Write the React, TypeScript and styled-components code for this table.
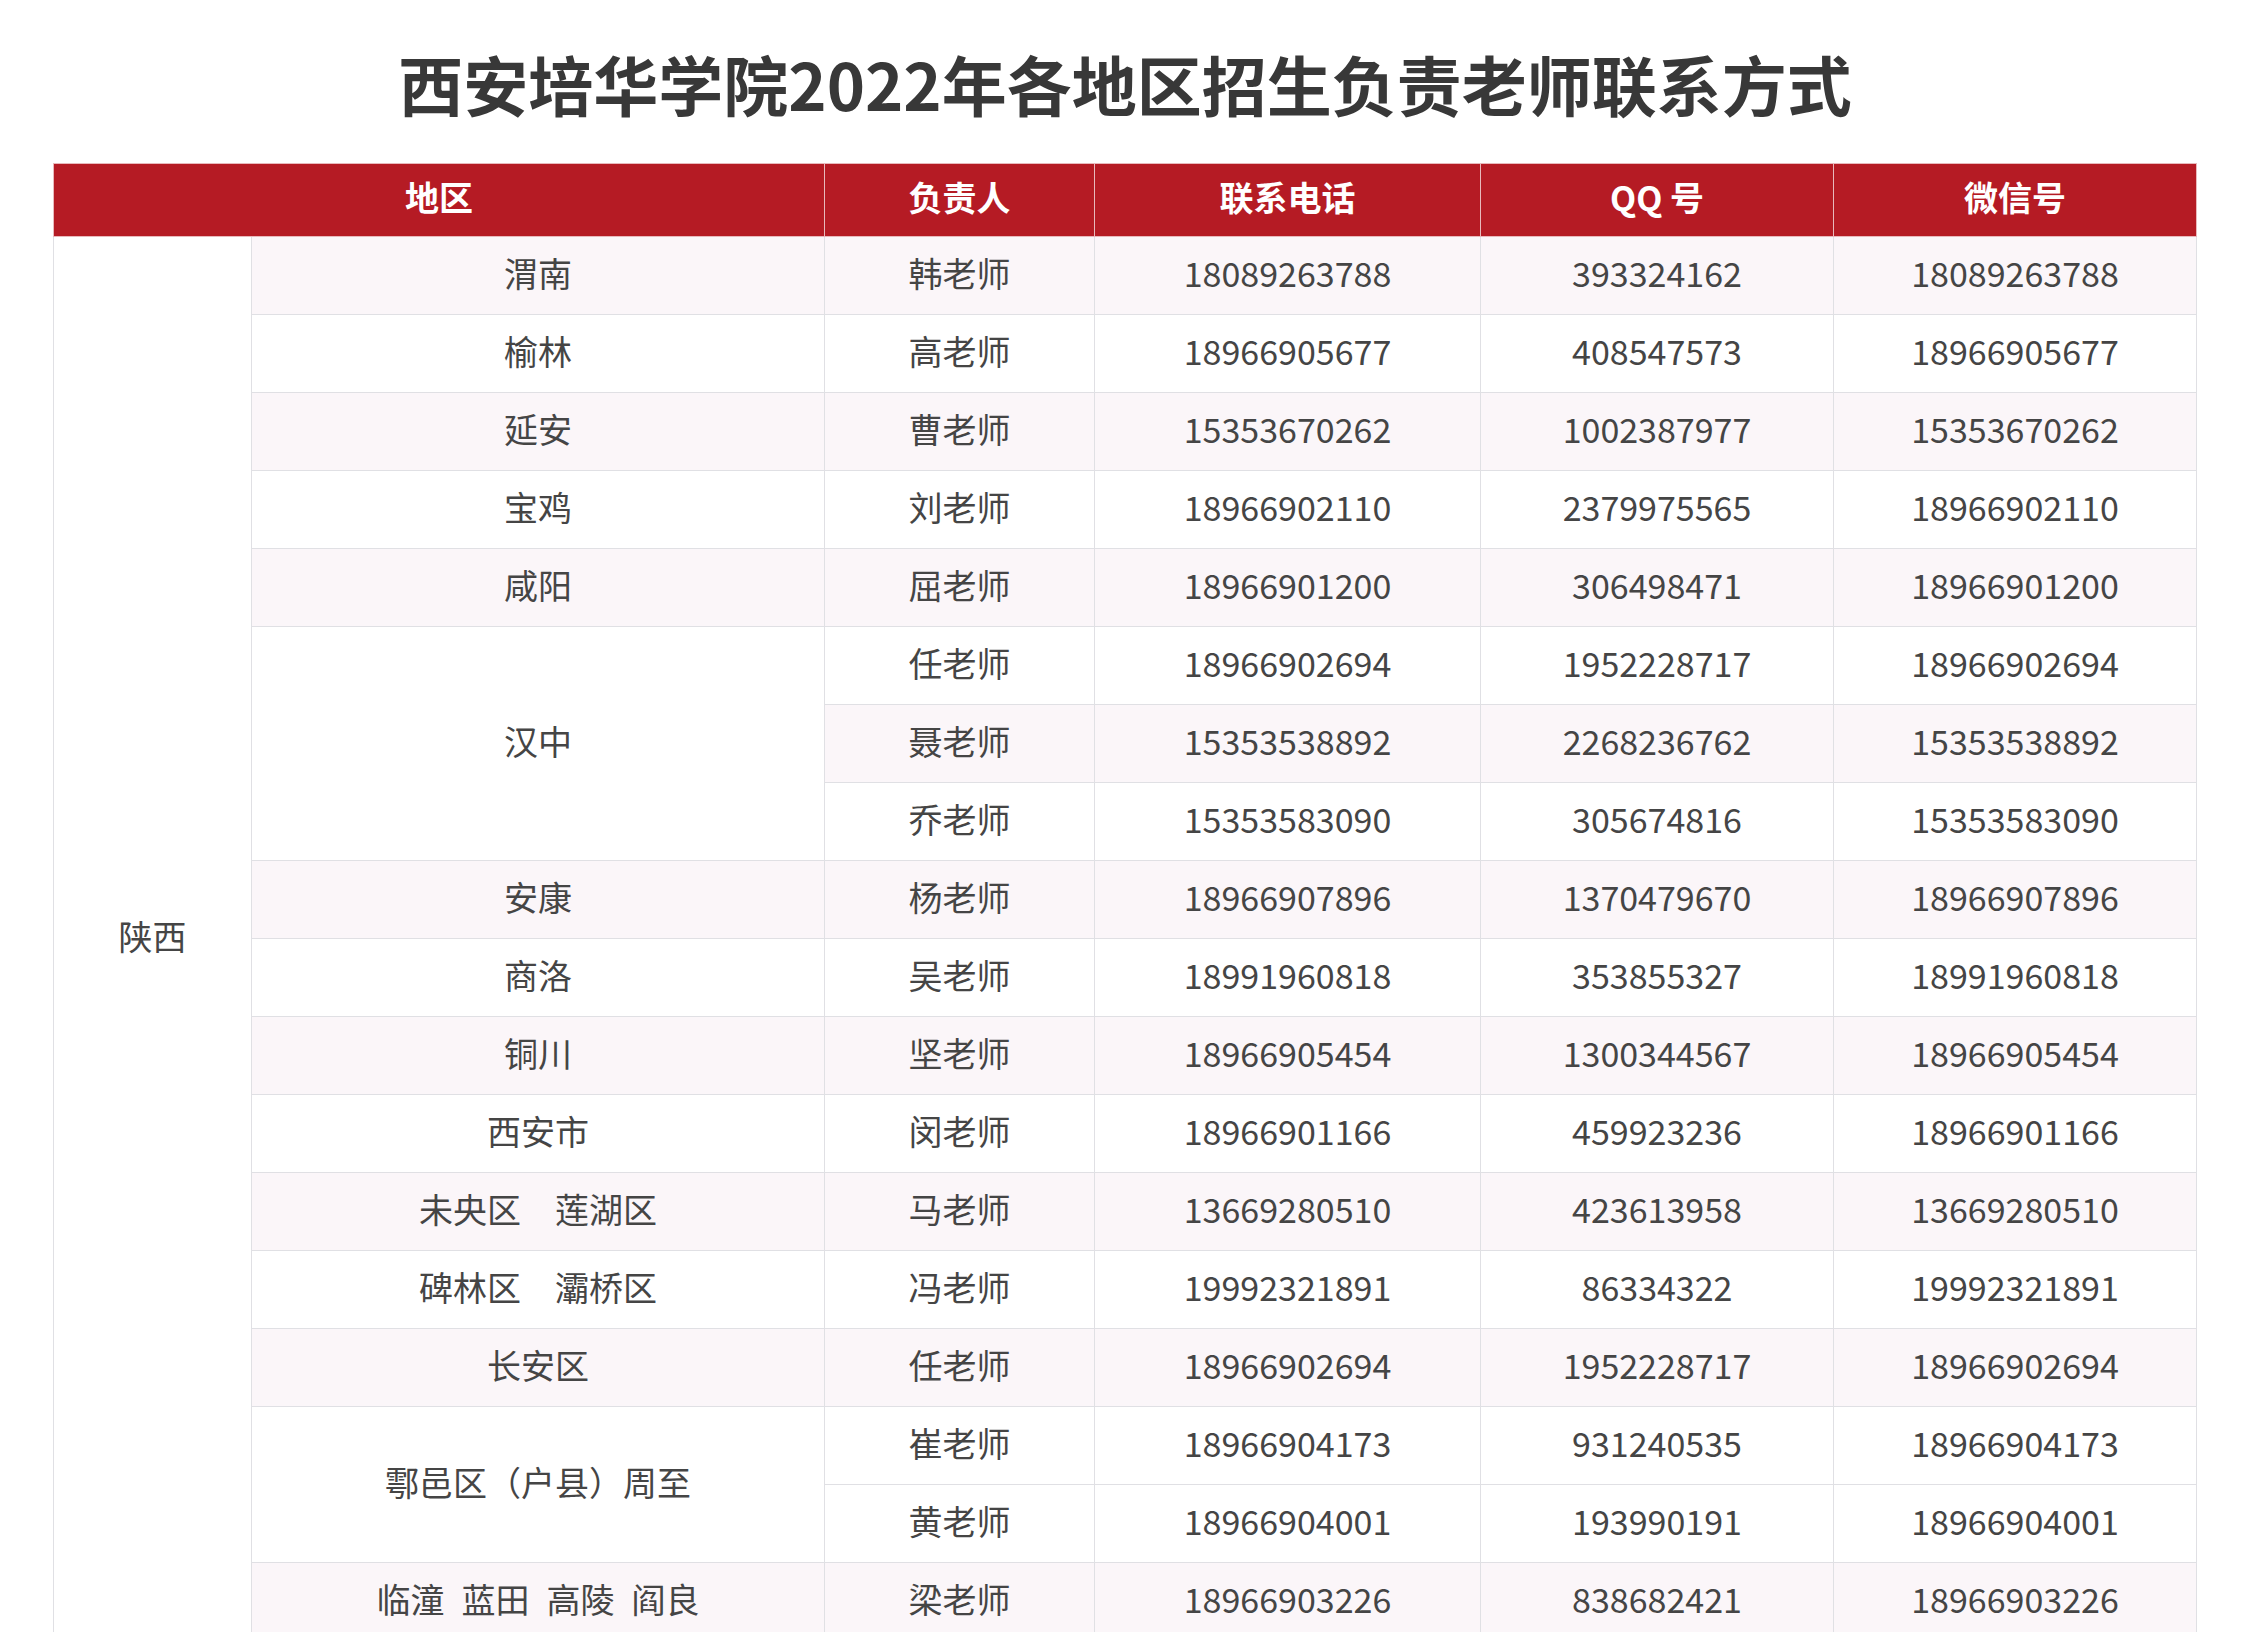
import React from 'react';
import styled, { createGlobalStyle } from 'styled-components';

const GlobalStyle = createGlobalStyle`
  html, body {
    margin: 0;
    padding: 0;
    background: #ffffff;
  }
  body {
    font-family: 'Noto Sans CJK SC', 'Noto Sans', sans-serif;
    color: #454545;
  }
`;

const Page = styled.div`
  width: 2250px;
  padding-top: 36px;
`;

const Title = styled.h1`
  margin: 0 0 32px;
  text-align: center;
  font-size: 65px;
  line-height: 95px;
  font-weight: 700;
  color: #383838;
`;

const Table = styled.table`
  margin: 0 auto;
  width: 2143px;
  border-collapse: collapse;
  table-layout: fixed;
`;

const HeadCell = styled.th`
  height: 65px;
  padding: 0 0 7px;
  background: #b51b24;
  color: #ffffff;
  font-size: 34px;
  font-weight: 700;
  text-align: center;
  border: 1px solid #e8b9bc;
`;

const Cell = styled.td<{ $shade?: boolean }>`
  height: 70px;
  padding: 0 0 7px;
  font-size: 34px;
  text-align: center;
  vertical-align: middle;
  color: #454545;
  background: ${(p) => (p.$shade ? '#fbf6f9' : '#ffffff')};
  border: 1px solid #e0e0e4;
  white-space: pre;
`;

type Row = {
  area?: string;
  span?: number;
  name: string;
  phone: string;
  qq: string;
  shade: boolean;
};

const rows: Row[] = [
  { area: '渭南', name: '韩老师', phone: '18089263788', qq: '393324162', shade: true },
  { area: '榆林', name: '高老师', phone: '18966905677', qq: '408547573', shade: false },
  { area: '延安', name: '曹老师', phone: '15353670262', qq: '1002387977', shade: true },
  { area: '宝鸡', name: '刘老师', phone: '18966902110', qq: '2379975565', shade: false },
  { area: '咸阳', name: '屈老师', phone: '18966901200', qq: '306498471', shade: true },
  { area: '汉中', span: 3, name: '任老师', phone: '18966902694', qq: '1952228717', shade: false },
  { name: '聂老师', phone: '15353538892', qq: '2268236762', shade: true },
  { name: '乔老师', phone: '15353583090', qq: '305674816', shade: false },
  { area: '安康', name: '杨老师', phone: '18966907896', qq: '1370479670', shade: true },
  { area: '商洛', name: '吴老师', phone: '18991960818', qq: '353855327', shade: false },
  { area: '铜川', name: '坚老师', phone: '18966905454', qq: '1300344567', shade: true },
  { area: '西安市', name: '闵老师', phone: '18966901166', qq: '459923236', shade: false },
  { area: '未央区　莲湖区', name: '马老师', phone: '13669280510', qq: '423613958', shade: true },
  { area: '碑林区　灞桥区', name: '冯老师', phone: '19992321891', qq: '86334322', shade: false },
  { area: '长安区', name: '任老师', phone: '18966902694', qq: '1952228717', shade: true },
  { area: '鄠邑区（户县）周至', span: 2, name: '崔老师', phone: '18966904173', qq: '931240535', shade: false },
  { name: '黄老师', phone: '18966904001', qq: '193990191', shade: false },
  { area: '临潼\u2002蓝田\u2002高陵\u2002阎良', name: '梁老师', phone: '18966903226', qq: '838682421', shade: true },
];

export default function App() {
  return (
    <Page>
      <GlobalStyle />
      <Title>西安培华学院2022年各地区招生负责老师联系方式</Title>
      <Table>
        <colgroup>
          <col style={{ width: 198 }} />
          <col style={{ width: 573 }} />
          <col style={{ width: 270 }} />
          <col style={{ width: 386 }} />
          <col style={{ width: 353 }} />
          <col style={{ width: 363 }} />
        </colgroup>
        <thead>
          <tr>
            <HeadCell colSpan={2}>地区</HeadCell>
            <HeadCell>负责人</HeadCell>
            <HeadCell>联系电话</HeadCell>
            <HeadCell>QQ 号</HeadCell>
            <HeadCell>微信号</HeadCell>
          </tr>
        </thead>
        <tbody>
          {rows.map((r, i) => (
            <tr key={i}>
              {i === 0 && <Cell rowSpan={rows.length}>陕西</Cell>}
              {r.area && (
                <Cell rowSpan={r.span ?? 1} $shade={r.shade}>
                  {r.area}
                </Cell>
              )}
              <Cell $shade={r.shade}>{r.name}</Cell>
              <Cell $shade={r.shade}>{r.phone}</Cell>
              <Cell $shade={r.shade}>{r.qq}</Cell>
              <Cell $shade={r.shade}>{r.phone}</Cell>
            </tr>
          ))}
        </tbody>
      </Table>
    </Page>
  );
}
